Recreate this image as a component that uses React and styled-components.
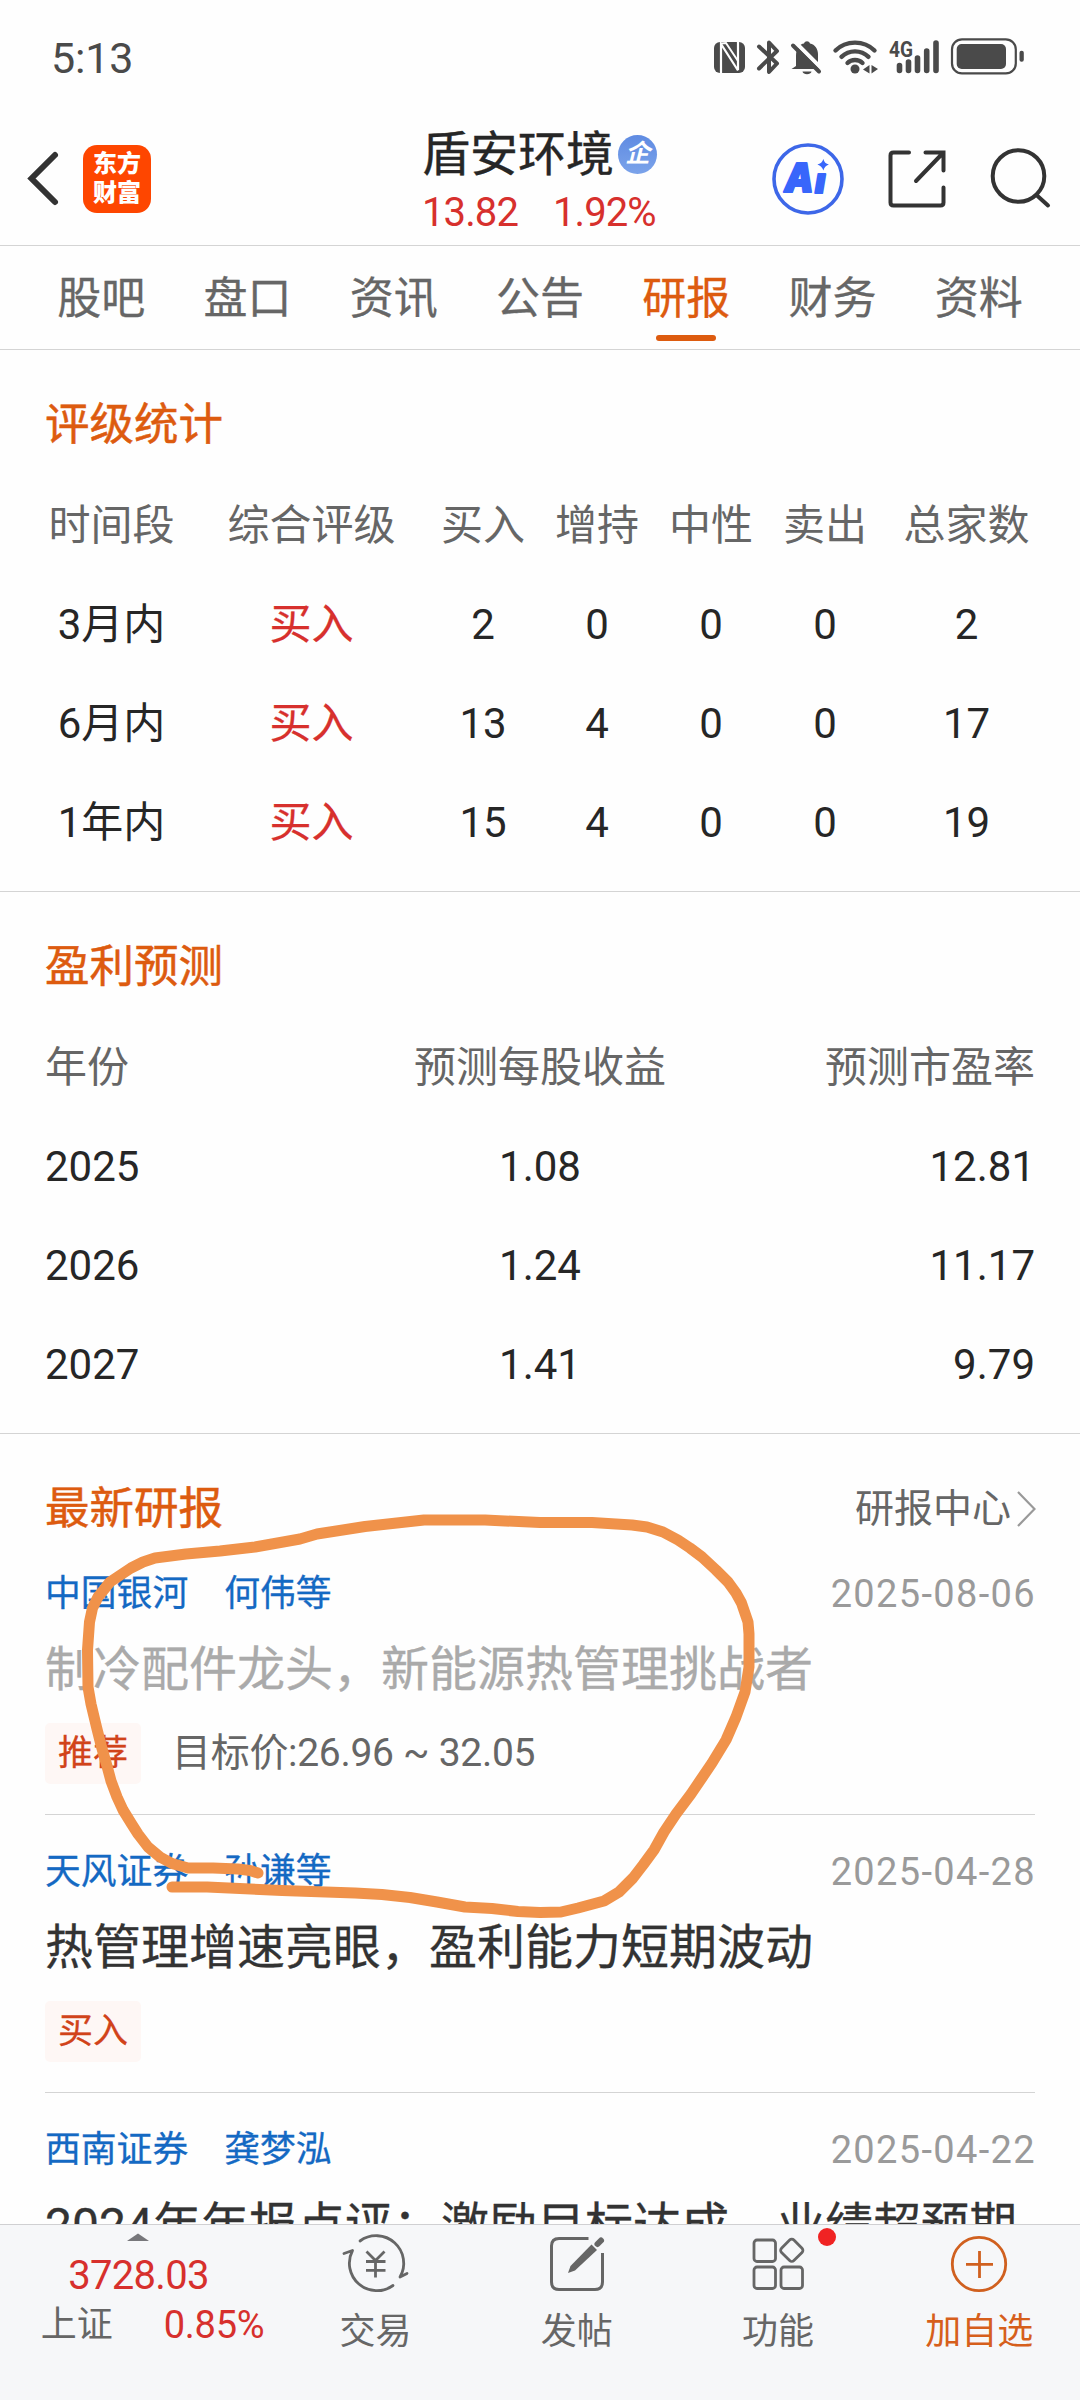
import React from 'react';
import styled, { createGlobalStyle } from 'styled-components';

const GlobalStyle = createGlobalStyle`
  * {
    box-sizing: border-box;
  }
  body {
    margin: 0;
    background-color: #fefefe;
    font-family: Roboto, 'Noto Sans CJK SC', sans-serif;
    color: #262626;
  }
`;

const Page = styled.div`
  position: relative;
  display: flex;
  flex-direction: column;
  width: 1080px;
  height: 2400px;
  overflow: hidden;
  background-color: #fefefe;
`;

const StatusBar = styled.div`
  display: flex;
  align-items: center;
  justify-content: space-between;
  height: 112px;
  padding: 0 52px;
  flex-shrink: 0;
`;

const Clock = styled.div`
  font-size: 43px;
  line-height: 50px;
  padding-top: 4px;
  margin-left: -1px;
  letter-spacing: -0.2px;
  color: #4a4a4a;
`;

const StatusIcons = styled.div`
  display: flex;
  svg {
    display: block;
  }
`;

const Header = styled.div`
  display: grid;
  grid-template-columns: 27px 56px 339px auto 1fr;
  align-items: center;
  height: 134px;
  padding-right: 26px;
  flex-shrink: 0;
  border-bottom: 1px solid #d4d4d4;
  svg {
    display: block;
  }
`;

const Logo = styled.div`
  width: 68px;
  height: 68px;
  padding: 5px 0;
  border-radius: 14px;
  background-color: #fe4600;
  color: #fff;
  font-size: 24px;
  font-weight: 900;
  line-height: 29px;
  text-align: center;
`;

const StockTitle = styled.div`
  display: flex;
  flex-direction: column;
  padding-top: 6px;
`;

const StockName = styled.div`
  display: flex;
  align-items: center;
  font-size: 48px;
  line-height: 62px;
  gap: 4px;
  -webkit-text-stroke: 0.4px currentColor;
`;

const CompanyBadge = styled.span`
  width: 39px;
  height: 39px;
  border-radius: 50%;
  background: linear-gradient(#5f8be2, #7ba3ea);
  color: #fff;
  font-size: 25px;
  font-style: italic;
  font-weight: 700;
  line-height: 37px;
  text-align: center;
  -webkit-text-stroke: 0;
`;

const StockPrice = styled.div`
  display: flex;
  gap: 35px;
  font-size: 40px;
  line-height: 54px;
  letter-spacing: -0.9px;
  color: #d7302d;
`;

const HeaderActions = styled.div`
  display: flex;
  align-items: center;
  justify-content: flex-end;
  gap: 43px;
`;

const Tabs = styled.div`
  display: flex;
  height: 104px;
  padding: 0 28px;
  flex-shrink: 0;
  border-bottom: 1px solid #d4d4d4;
`;

const Tab = styled.div`
  position: relative;
  flex: 1;
  font-size: 44px;
  line-height: 106px;
  text-align: center;
  -webkit-text-stroke: 0.3px currentColor;
  color: ${props => (props.$active ? '#dd5b0f' : '#666')};
`;

const TabLine = styled.span`
  position: absolute;
  left: 50%;
  bottom: 8px;
  width: 60px;
  height: 6px;
  margin-left: -30px;
  border-radius: 3px;
  background-color: #dd5b0f;
`;

const Section = styled.div`
  height: 542px;
  padding-top: 26px;
  flex-shrink: 0;
  border-bottom: 1px solid #d4d4d4;
`;

const SectionTitle = styled.div`
  height: 99px;
  padding-left: 45px;
  font-size: 44.5px;
  line-height: 99px;
  -webkit-text-stroke: 0.5px currentColor;
  color: #dd5b0f;
`;

const RatingRow = styled.div`
  display: grid;
  grid-template-columns: 171px 229px repeat(3, 114px) 114px 169px;
  padding-left: 26px;
  height: 99px;
  font-size: 42px;
  line-height: 101px;
  text-align: center;
  color: ${props => (props.$head ? '#666' : '#262626')};
`;

const Rating = styled.span`
  color: #d7302d;
  -webkit-text-stroke: 0.3px currentColor;
`;

const ForecastRow = styled.div`
  display: grid;
  grid-template-columns: repeat(3, 1fr);
  height: 99px;
  padding: 0 45px;
  font-size: 42px;
  line-height: 101px;
  color: ${props => (props.$head ? '#666' : '#262626')};
  & > :nth-child(2) {
    text-align: center;
  }
  & > :nth-child(3) {
    text-align: right;
  }
`;

const Reports = styled.div`
  flex: 1;
  min-height: 0;
  overflow: hidden;
`;

const ReportsHead = styled.div`
  display: flex;
  align-items: center;
  justify-content: space-between;
  height: 103px;
  padding: 46px 44px 0 45px;
  font-size: 44.5px;
  line-height: 58px;
  -webkit-text-stroke: 0.5px currentColor;
  color: #dd5b0f;
`;

const MoreLink = styled.div`
  display: flex;
  align-items: center;
  gap: 5px;
  font-size: 39px;
  color: #666;
  -webkit-text-stroke: 0;
`;

const Report = styled.div`
  height: 278px;
  margin: 0 45px;
  padding-top: 32px;
  border-bottom: 1px solid #d4d4d4;
`;

const ReportMeta = styled.div`
  display: flex;
  justify-content: space-between;
  height: 50px;
  line-height: 50px;
`;

const Broker = styled.div`
  display: flex;
  gap: 36px;
  font-size: 35.8px;
  -webkit-text-stroke: 0.3px currentColor;
  color: #1469c3;
`;

const ReportDate = styled.div`
  font-size: 38px;
  letter-spacing: 1.35px;
  margin-right: -1px;
  color: #9a9a9a;
`;

const ReportTitle = styled.div`
  height: 100px;
  font-size: 48px;
  line-height: 101px;
  white-space: nowrap;
  -webkit-text-stroke: 0.3px currentColor;
  color: ${props => (props.$read ? '#aaa' : '#333')};
`;

const ReportFoot = styled.div`
  display: flex;
  align-items: center;
  gap: 31px;
  height: 61px;
  margin-top: 4px;
`;

const Tag = styled.span`
  width: 96px;
  height: 61px;
  border-radius: 5px;
  background-color: #fef7f5;
  color: #d1431a;
  font-size: 35px;
  line-height: 62px;
  text-align: center;
  -webkit-text-stroke: 0.3px currentColor;
`;

const TargetPrice = styled.span`
  font-size: 39px;
  line-height: 50px;
  letter-spacing: -0.3px;
  padding-bottom: 2px;
  color: #666;
`;

const Footer = styled.div`
  display: flex;
  height: 176px;
  flex-shrink: 0;
  background-color: #f6f7f9;
  border-top: 1px solid #d0d0d2;
`;

const IndexBox = styled.div`
  display: flex;
  flex-direction: column;
  align-items: center;
  width: 275px;
  padding-top: 8px;
  svg {
    display: block;
  }
`;

const IndexValue = styled.div`
  margin-top: 10px;
  margin-left: 2px;
  font-size: 40px;
  line-height: 50px;
  letter-spacing: -0.7px;
  color: #d7302d;
`;

const IndexChange = styled.div`
  display: flex;
  gap: 51px;
  margin-left: 30px;
  font-size: 36px;
  line-height: 48px;
  color: #666;
`;

const Percent = styled.span`
  font-size: 38px;
  letter-spacing: -0.3px;
  color: #d7302d;
`;

const NavItem = styled.div`
  position: relative;
  flex: 1;
  display: flex;
  flex-direction: column;
  align-items: center;
  padding-top: 5px;
  font-size: 36px;
  line-height: 68px;
  color: ${props => (props.$active ? '#d65f1c' : '#666')};
  svg {
    display: block;
  }
`;

const RedDot = styled.span`
  position: absolute;
  top: 3px;
  left: 140px;
  width: 18px;
  height: 18px;
  border-radius: 50%;
  background-color: #f02323;
`;

const Doodle = styled.svg`
  position: absolute;
  left: 0;
  top: 1500px;
  pointer-events: none;
`;

const tabs = ['股吧', '盘口', '资讯', '公告', '研报', '财务', '资料'];

const ratingHead = ['时间段', '综合评级', '买入', '增持', '中性', '卖出', '总家数'];
const ratings = [
  { period: '3月内', rating: '买入', counts: [2, 0, 0, 0, 2] },
  { period: '6月内', rating: '买入', counts: [13, 4, 0, 0, 17] },
  { period: '1年内', rating: '买入', counts: [15, 4, 0, 0, 19] },
];

const forecasts = [
  ['2025', '1.08', '12.81'],
  ['2026', '1.24', '11.17'],
  ['2027', '1.41', '9.79'],
];

const reports = [
  {
    broker: '中国银河',
    author: '何伟等',
    date: '2025-08-06',
    title: '制冷配件龙头，新能源热管理挑战者',
    tag: '推荐',
    target: '目标价:26.96 ~ 32.05',
    read: true,
  },
  {
    broker: '天风证券',
    author: '孙谦等',
    date: '2025-04-28',
    title: '热管理增速亮眼，盈利能力短期波动',
    tag: '买入',
  },
  {
    broker: '西南证券',
    author: '龚梦泓',
    date: '2025-04-22',
    title: '2024年年报点评：激励目标达成，业绩超预期',
  },
];

const PhoneStatus = () => (
  <StatusIcons>
    <svg width="38" height="40" viewBox="712 36 38 40">
      <rect x="714" y="42" width="31" height="31" rx="6" fill="#4a4a4a" />
      <path d="M721 73V44L738 70.500M738 42V70" fill="none" stroke="#fefefe" strokeWidth="2.200" />
      <path d="M721 43.500L726 43L738 61" fill="none" stroke="#fefefe" strokeWidth="2" />
    </svg>
    <svg width="36" height="40" viewBox="750 36 36 40" fill="none" stroke="#4a4a4a" strokeWidth="4" strokeLinecap="round" strokeLinejoin="round">
      <path d="M759 46.500L777 63.500L769 72V42.500L777 51L759 68.500" />
    </svg>
    <svg width="42" height="40" viewBox="786 36 42 40">
      <path d="M796 66V56C796 48 800 44 804 43.500C805 40.500 809 40.500 810 43.500C815 44.500 818 49 818 54V64L821 69H791.500Z" fill="#4a4a4a" />
      <path d="M802.500 71.500H811.500C811 75 803 75 802.500 71.500Z" fill="#4a4a4a" />
      <path d="M795 42L824 71" stroke="#fefefe" strokeWidth="4" />
      <path d="M793 45.500L819 71.500" stroke="#4a4a4a" strokeWidth="4" strokeLinecap="round" />
    </svg>
    <svg width="56" height="40" viewBox="828 36 56 40" fill="none" stroke="#4a4a4a" strokeWidth="4.400" strokeLinecap="round">
      <path d="M835.500 50.500C846 40 864 40 874.500 50.500" />
      <path d="M841.500 56.800C849 49.500 861 49.500 868.500 56.800" />
      <path d="M847.500 63C851.500 59 858.500 59 862.500 63" />
      <circle cx="855" cy="69" r="4.500" fill="#4a4a4a" stroke="none" />
      <path d="M869.500 65V73.500L863 69.500ZM871.500 65V73.500L878 69Z" fill="#4a4a4a" stroke="none" />
    </svg>
    <svg width="62" height="40" viewBox="884 36 62 40" fill="none" stroke="#4a4a4a" strokeWidth="5.600" strokeLinecap="round">
      <text x="889" y="56.500" textLength="24" lengthAdjust="spacingAndGlyphs" fontSize="22" fontWeight="700" fill="#4a4a4a" stroke="none">4G</text>
      <path d="M899.500 65.500V70.500M908.500 62V70.500M917.500 58V70.500M926.700 51V70.500M936 43V70.500" />
    </svg>
    <svg width="82" height="40" viewBox="946 36 82 40">
      <rect x="952" y="39.400" width="63.800" height="34" rx="10" fill="none" stroke="#4a4a4a" strokeWidth="2.200" />
      <rect x="956.700" y="44" width="49.300" height="25" rx="5" fill="#4a4a4a" />
      <rect x="1019.500" y="50.700" width="4.300" height="11" rx="2" fill="#4a4a4a" />
    </svg>
  </StatusIcons>
);

const BackIcon = () => (
  <svg width="34" height="60" viewBox="0 0 34 60" fill="none" stroke="#333" strokeWidth="6" strokeLinecap="round" strokeLinejoin="miter">
    <path d="M28 6L4.500 29.500L28 53" />
  </svg>
);

const AiIcon = () => (
  <svg width="72" height="76" viewBox="772.600 140.500 72 76">
    <ellipse cx="808.600" cy="178.500" rx="34" ry="34" fill="none" stroke="#3d67e8" strokeWidth="3.600" />
    <g fill="#3866fb" stroke="#3866fb" strokeWidth="2" strokeLinejoin="round" fontFamily="Inter" fontWeight="900" fontStyle="italic" fontSize="40">
      <text x="785" y="191.500" textLength="29" lengthAdjust="spacingAndGlyphs">A</text>
      <text x="815.500" y="192" fontSize="35">ı</text>
    </g>
    <path d="M824 158.500Q825 163 829.500 164Q825 165.500 824 170Q822.500 165.500 818 164Q822.500 163 824 158.500Z" fill="#3866fb" />
  </svg>
);

const ShareIcon = () => (
  <svg width="60" height="60" viewBox="886.500 148.500 60 60" fill="none" stroke="#333" strokeWidth="4" strokeLinecap="round">
    <path d="M908.500 152H893Q890 152 890 155V202Q890 205 893 205H940Q943 205 943 202V187" />
    <path d="M925 152H943V170M941.500 153.500L915.500 180.500" />
  </svg>
);

const SearchIcon = () => (
  <svg width="64" height="62" viewBox="990 147.500 64 62" fill="none" stroke="#333" strokeWidth="4" strokeLinecap="round">
    <circle cx="1018.500" cy="175.500" r="25.800" />
    <path d="M1037 195L1048 205" />
  </svg>
);

const TradeIcon = () => (
  <svg width="68" height="68" viewBox="342 2230 68 68" fill="none" stroke="#666" strokeWidth="2.800" strokeLinecap="round" strokeLinejoin="round">
    <path d="M360 2241A27.500 27.500 0 0 1 400 2277L407 2273.500" />
    <path d="M393 2285.500A27.500 27.500 0 0 1 352.500 2250.500L344 2253.500" />
    <path d="M366.500 2251.500L375.500 2260.500L384.500 2251.500M375.500 2260.500V2277.500M366 2261.500H385.500M366 2270.300H385.500" strokeLinecap="butt" />
  </svg>
);

const PostIcon = () => (
  <svg width="68" height="68" viewBox="543 2230 68 68" fill="none" stroke="#666" strokeWidth="3">
    <path d="M588.500 2238.500H559Q551.500 2238.500 551.500 2246V2282Q551.500 2289.500 559 2289.500H595Q602.500 2289.500 602.500 2282V2253" />
    <path d="M591.500 2244.500L597 2250L575 2270.500L568 2273L570.500 2266Z" fill="#666" stroke="none" />
    <path d="M597.500 2244L601 2240.500" strokeWidth="6" strokeLinecap="round" />
  </svg>
);

const FeatureIcon = () => (
  <svg width="68" height="68" viewBox="744 2230 68 68" fill="none" stroke="#666" strokeWidth="2.800">
    <rect x="754" y="2240" width="21.500" height="21.500" rx="3" />
    <rect x="754" y="2267" width="21.500" height="21.500" rx="3" />
    <rect x="781" y="2267" width="21.500" height="21.500" rx="3" />
    <rect x="783" y="2241.500" width="17.500" height="17.500" rx="3" transform="rotate(45 791.700 2250.300)" />
  </svg>
);

const AddIcon = () => (
  <svg width="68" height="68" viewBox="945 2230 68 68" fill="none" stroke="#d0601f" strokeWidth="2.800">
    <circle cx="979" cy="2264" r="26.700" />
    <path d="M966 2264.300H993M979.500 2251V2278" />
  </svg>
);

// freehand circle around the first report
const doodlePoints = `258,1873 250,1870.500 238,1869 213,1868 188,1868 172,1863.500 160,1857 148,1847
  138,1834 131,1823 123,1810 117,1797 111,1781 107,1766 101,1745 96.500,1727 91,1704 88,1687 87.500,1650
  89.500,1622 92.500,1608 98,1597 110,1582 131,1568 143,1562 155,1558 186,1554 220,1551 255,1547 300,1539
  317,1534 365,1526.500 424,1520 485,1520 540,1522.500 592,1522.500 632,1525 647,1527 663,1532 678,1540
  690,1548 702,1557 716,1570 728,1582 736,1593 741.500,1603 748,1622 749,1634 749,1667 745,1692 736,1717
  726,1740 712,1763 691,1794 676,1814 664,1832 654,1850 643,1865 633,1878 619,1892 604,1901 578,1908
  561,1912 540,1912.500 518,1911.500 492,1908.500 465,1907 437,1902 410,1897.500 382,1894.500 355,1893
  282,1890.500 207,1887 172,1887`;

const App = () => {
  return (
    <Page>
      <GlobalStyle />
      <StatusBar>
        <Clock>5:13</Clock>
        <PhoneStatus />
      </StatusBar>

      <Header>
        <span />
        <BackIcon />
        <Logo>
          东方
          <br />
          财富
        </Logo>
        <StockTitle>
          <StockName>
            盾安环境
            <CompanyBadge>企</CompanyBadge>
          </StockName>
          <StockPrice>
            <span>13.82</span>
            <span>1.92%</span>
          </StockPrice>
        </StockTitle>
        <HeaderActions>
          <AiIcon />
          <ShareIcon />
          <SearchIcon />
        </HeaderActions>
      </Header>

      <Tabs>
        {tabs.map(tab => (
          <Tab key={tab} $active={tab === '研报'}>
            {tab}
            {tab === '研报' && <TabLine />}
          </Tab>
        ))}
      </Tabs>

      <Section>
        <SectionTitle>评级统计</SectionTitle>
        <RatingRow $head>
          {ratingHead.map(name => (
            <span key={name}>{name}</span>
          ))}
        </RatingRow>
        {ratings.map(row => (
          <RatingRow key={row.period}>
            <span>{row.period}</span>
            <Rating>{row.rating}</Rating>
            {row.counts.map((count, i) => (
              <span key={i}>{count}</span>
            ))}
          </RatingRow>
        ))}
      </Section>

      <Section>
        <SectionTitle>盈利预测</SectionTitle>
        <ForecastRow $head>
          <span>年份</span>
          <span>预测每股收益</span>
          <span>预测市盈率</span>
        </ForecastRow>
        {forecasts.map(row => (
          <ForecastRow key={row[0]}>
            {row.map(value => (
              <span key={value}>{value}</span>
            ))}
          </ForecastRow>
        ))}
      </Section>

      <Reports>
        <ReportsHead>
          最新研报
          <MoreLink>
            研报中心
            <svg width="20" height="38" viewBox="0 0 20 38" fill="none" stroke="#999" strokeWidth="2.200">
              <path d="M2 2L18.500 19L2 36" />
            </svg>
          </MoreLink>
        </ReportsHead>
        {reports.map(report => (
          <Report key={report.date}>
            <ReportMeta>
              <Broker>
                <span>{report.broker}</span>
                <span>{report.author}</span>
              </Broker>
              <ReportDate>{report.date}</ReportDate>
            </ReportMeta>
            <ReportTitle $read={report.read}>{report.title}</ReportTitle>
            {report.tag && (
              <ReportFoot>
                <Tag>{report.tag}</Tag>
                {report.target && <TargetPrice>{report.target}</TargetPrice>}
              </ReportFoot>
            )}
          </Report>
        ))}
      </Reports>

      <Footer>
        <IndexBox>
          <svg width="22" height="8" viewBox="0 0 22 8">
            <path d="M0 8L11 0.500L22 8Z" fill="#77777b" />
          </svg>
          <IndexValue>3728.03</IndexValue>
          <IndexChange>
            上证
            <Percent>0.85%</Percent>
          </IndexChange>
        </IndexBox>
        <NavItem>
          <TradeIcon />
          交易
        </NavItem>
        <NavItem>
          <PostIcon />
          发帖
        </NavItem>
        <NavItem>
          <FeatureIcon />
          功能
          <RedDot />
        </NavItem>
        <NavItem $active>
          <AddIcon />
          加自选
        </NavItem>
      </Footer>

      <Doodle width="800" height="440" viewBox="0 1500 800 440">
        <polyline points={doodlePoints} fill="none" stroke="#f0924a" strokeWidth="11" strokeLinecap="round" strokeLinejoin="round" />
      </Doodle>
    </Page>
  );
};

export default App;
